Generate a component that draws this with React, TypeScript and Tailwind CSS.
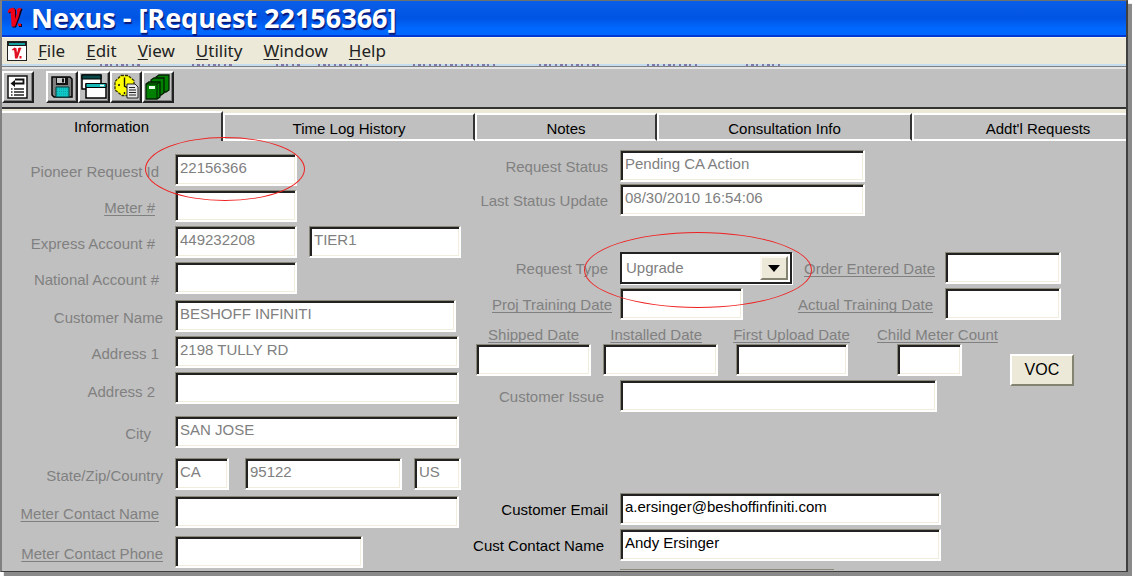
import React from "react";

const FONT = "font-['Liberation_Sans',Arial,sans-serif]";

function VMark({ className }: { className?: string }) {
  return (
    <svg viewBox="0 0 16 22" className={className} aria-hidden="true">
      <path d="M1.500 5.500L3 2.500L7 1L9 3L9.200 11.500L10.800 6L10.500 3L13 1.200L15.500 2L14.500 5L12.500 11L9 20.500H5.500L5 12L4.500 5L2.500 6.500Z" fill="#180018" />
      <path d="M0.500 5L2 2L6 0.500L8 2.500L8.200 12L10 6L9.500 2.500L12 0.800L14.500 1.500L13 4L11.500 10L8 19.500H4.500L4.200 12L3.500 4.500L1.500 6Z" fill="#f00018" />
      <path d="M12 17h3v3h-3z" fill="#180018" />
      <path d="M11 16.500h3v2.500h-3z" fill="#f00018" />
    </svg>
  );
}

function DocumentIcon() {
  return (
    <svg viewBox="0 0 21 21" className="h-[21px] w-[21px]" aria-hidden="true">
      <rect x="0.500" y="0.500" width="19" height="19" fill="#fff" stroke="#222" />
      <path d="M1 1h18v4H1z" fill="#1c1c1c" />
      <path d="M2 2h16v2H2z" fill="#18a0a0" />
      <path d="M5 8.500L7.500 6.500L9.500 7.500L10 12L11 9L10.800 7.500L12.500 6.500L14.500 7L13.500 9L10.500 17.500H8L7.500 12L7 9L5.500 9.500Z" fill="#e01020" />
      <path d="M12.500 15h2v2.500h-2z" fill="#e01020" />
    </svg>
  );
}

function ListIcon() {
  return (
    <svg viewBox="0 0 24 24" className="h-6 w-6" aria-hidden="true">
      <rect x="2" y="1" width="19" height="22" fill="#fff" stroke="#111" strokeWidth="1.500" />
      <path d="M7 8.500h10.500V4.500H9" fill="none" stroke="#111" strokeWidth="1.800" />
      <path d="M9 5L4.500 8.500L9 12z" fill="#111" />
      <path d="M8 14h10M8 17h10M8 20h10" stroke="#222" strokeWidth="1.300" />
      <path d="M5 14h1.500M5 17h1.500M5 20h1.500" stroke="#222" strokeWidth="1.300" />
    </svg>
  );
}

function SaveIcon() {
  return (
    <svg viewBox="0 0 24 24" className="h-6 w-6" aria-hidden="true">
      <path d="M2 2h18l2 2v18H4l-2-2z" fill="#808080" stroke="#000" strokeWidth="1.500" />
      <path d="M6 2h12v8H6z" fill="#111" />
      <path d="M7 3h8v5H7z" fill="#c8c8c8" />
      <path d="M12 3.500h2v4h-2z" fill="#111" />
      <path d="M6 12h13v10H6z" fill="#10c8c8" stroke="#003838" />
      <path d="M7 14h11M7 16.500h11M7 19h11" stroke="#08a0a0" strokeDasharray="1 1" />
    </svg>
  );
}

function WindowsIcon() {
  return (
    <svg viewBox="0 0 26 26" className="h-[26px] w-[26px]" aria-hidden="true">
      <rect x="1" y="1" width="19" height="14" fill="#fff" stroke="#000" strokeWidth="1.500" />
      <path d="M1 1h19v4H1z" fill="#084848" stroke="#000" />
      <rect x="5" y="10" width="20" height="14" fill="#fff" stroke="#000" strokeWidth="1.500" />
      <path d="M5 9.500h20v4H5z" fill="#18b8b8" stroke="#000" />
      <path d="M19 11.500h4" stroke="#fff" strokeWidth="1.500" />
    </svg>
  );
}

function ClockIcon() {
  return (
    <svg viewBox="0 0 26 26" className="h-[26px] w-[26px]" aria-hidden="true">
      <path d="M8 1.500h7l6 5v8l-5 7H9L2 16V7.500z" fill="#ffff00" stroke="#333300" strokeWidth="1.300" strokeDasharray="3 1" />
      <path d="M11.500 3.500V12l5 3M5 11h2M11.500 18v2M17 11h2" fill="none" stroke="#111" strokeWidth="1.400" />
      <path d="M14 10h8l3 3v11H14z" fill="#e8e8e8" stroke="#222" />
      <path d="M16 13.500h6M16 16h7M16 18.500h7M16 21h7" stroke="#222" />
    </svg>
  );
}

function BooksIcon() {
  return (
    <svg viewBox="0 0 26 26" className="h-[26px] w-[26px]" aria-hidden="true">
      <path d="M11 3l3-2h10v15l-3 2H11z" fill="#008000" stroke="#002000" strokeWidth="1.300" />
      <path d="M6 6l3-2h10v15l-3 2H6z" fill="#008000" stroke="#002000" strokeWidth="1.300" />
      <path d="M1 10l3-2h11v15l-3 2H1z" fill="#008000" stroke="#002000" strokeWidth="1.300" />
      <path d="M1 10h11v15M12 10l3-2" fill="none" stroke="#002000" />
      <path d="M4 12h6v3H4z" fill="#e8ffe8" />
    </svg>
  );
}

function ToolButton({ label, children }: { label: string; children: React.ReactNode }) {
  return (
    <button
      type="button"
      aria-label={label}
      className="flex h-8 w-8 items-center justify-center border-2 border-t-white border-r-[#222] border-b-[#222] border-l-white bg-[#c0c0c0] shadow-[inset_-1px_-1px_0_#808080]"
    >
      {children}
    </button>
  );
}

function MenuItem({ text }: { text: string }) {
  return (
    <button type="button" className="text-[#222]">
      <span className="underline decoration-1 underline-offset-2">{text[0]}</span>
      {text.slice(1)}
    </button>
  );
}

type FieldProps = { id: string; value?: string; width: string; dark?: boolean; label?: string };

function Field({ id, value = "", width, dark, label }: FieldProps) {
  return (
    <input
      id={id}
      aria-label={label}
      defaultValue={value}
      readOnly={!dark}
      className={`block h-8 shrink-0 rounded-none border border-r-2 border-b-2 border-t-[#8a8878] border-r-white border-b-white border-l-[#8a8878] bg-white pb-1.5 pt-0.5 pl-1 text-[15px] leading-5 shadow-[inset_2px_2px_0_#222,inset_-1px_-1px_0_#f1ecdc] outline-none ${width} ${dark ? "text-black" : "text-[#808080]"}`}
    />
  );
}

type LabelProps = { htmlFor: string; text: string; box: string; underline?: boolean; dark?: boolean };

function Label({ htmlFor, text, box, underline, dark }: LabelProps) {
  return (
    <label
      htmlFor={htmlFor}
      className={`block shrink-0 whitespace-nowrap text-right text-[15px] leading-5 ${box} ${dark ? "text-black" : "text-[#808080]"} ${underline ? "underline decoration-1 underline-offset-2 [text-decoration-skip-ink:none]" : ""}`}
    >
      {text}
    </label>
  );
}

function Ring({ box }: { box: string }) {
  return <span aria-hidden="true" className={`pointer-events-none absolute z-10 rounded-[50%] border border-[#f02020] ${box}`} />;
}

const LEFT = "w-[173px] pt-1";
const RIGHT = "w-[159px] pt-0.5";

function LeftColumn() {
  return (
    <div className="w-[459px] shrink-0 pt-1">
      <div className="flex items-center">
        <Label htmlFor="req" text="Pioneer Request Id" box={`${LEFT} pr-4`} />
        <div className="relative">
          <Field id="req" value="22156366" width="w-[122px]" />
          <Ring box="-left-[30px] -top-[17px] h-16 w-40" />
        </div>
      </div>
      <div className="mt-1 flex items-center">
        <Label htmlFor="meter" text="Meter #" box={`${LEFT} pr-5`} underline />
        <Field id="meter" width="w-[122px]" />
      </div>
      <div className="mt-1 flex items-center">
        <Label htmlFor="express" text="Express Account #" box={`${LEFT} pr-5`} />
        <Field id="express" value="449232208" width="w-[122px]" />
        <div className="ml-3">
          <Field id="tier" label="Tier" value="TIER1" width="w-[152px]" />
        </div>
      </div>
      <div className="mt-1 flex items-center">
        <Label htmlFor="national" text="National Account #" box={`${LEFT} pr-4`} />
        <Field id="national" width="w-[122px]" />
      </div>
      <div className="mt-1.5 flex items-center">
        <Label htmlFor="customer" text="Customer Name" box={`${LEFT} pr-3`} />
        <Field id="customer" value="BESHOFF INFINITI" width="w-[281px]" />
      </div>
      <div className="mt-1 flex items-center">
        <Label htmlFor="addr1" text="Address 1" box={`${LEFT} pr-4`} />
        <Field id="addr1" value="2198 TULLY RD" width="w-[284px]" />
      </div>
      <div className="mt-1 flex items-center">
        <Label htmlFor="addr2" text="Address 2" box={`${LEFT} pt-2 pr-5`} />
        <Field id="addr2" width="w-[284px]" />
      </div>
      <div className="mt-3 flex items-center">
        <Label htmlFor="city" text="City" box={`${LEFT} pr-6`} />
        <Field id="city" value="SAN JOSE" width="w-[284px]" />
      </div>
      <div className="mt-2.5 flex items-center">
        <Label htmlFor="state" text="State/Zip/Country" box={`${LEFT} pr-3`} />
        <Field id="state" value="CA" width="w-[54px]" />
        <div className="ml-4">
          <Field id="zip" label="Zip" value="95122" width="w-[157px]" />
        </div>
        <div className="ml-3">
          <Field id="country" label="Country" value="US" width="w-[47px]" />
        </div>
      </div>
      <div className="mt-1.5 flex items-center">
        <Label htmlFor="mname" text="Meter Contact Name" box={`${LEFT} pr-4`} underline />
        <Field id="mname" width="w-[284px]" />
      </div>
      <div className="mt-2 flex items-center">
        <Label htmlFor="mphone" text="Meter Contact Phone" box={`${LEFT} pr-3`} underline />
        <Field id="mphone" width="w-[188px]" />
      </div>
    </div>
  );
}

function RightColumn() {
  return (
    <div className="min-w-0 flex-1">
      <div className="flex items-center">
        <Label htmlFor="status" text="Request Status" box={`${RIGHT} pr-3`} />
        <Field id="status" value="Pending CA Action" width="w-[245px]" />
      </div>
      <div className="mt-0.5 flex items-center">
        <Label htmlFor="updated" text="Last Status Update" box={`${RIGHT} pr-3`} />
        <Field id="updated" value="08/30/2010 16:54:06" width="w-[245px]" />
      </div>
      <div className="mt-9 flex items-center">
        <Label htmlFor="type" text="Request Type" box={`${RIGHT} pr-3`} />
        <div className="relative w-[172px] shrink-0">
          <select
            id="type"
            defaultValue="Upgrade"
            className="block h-8 w-full appearance-none rounded-none border-2 border-[#222] bg-white pl-1 text-[15px] leading-5 text-[#808080] shadow-[1px_1px_0_#fff] outline-none"
          >
            <option>Upgrade</option>
          </select>
          <span
            aria-hidden="true"
            className="pointer-events-none absolute right-1 top-1 flex h-6 w-7 items-center justify-center border-2 border-t-[#faf8f0] border-r-[#848270] border-b-[#848270] border-l-[#faf8f0] bg-[#ece9d8]"
          >
            <svg viewBox="0 0 12 7" className="h-[7px] w-3">
              <path d="M0 0h12L6 7z" fill="#000" />
            </svg>
          </span>
          <Ring box="-left-9 -top-5 h-[76px] w-[228px]" />
        </div>
        <Label htmlFor="ordered" text="Order Entered Date" box="w-[153px] pt-0.5 pr-2.5" underline />
        <Field id="ordered" width="w-[116px]" />
      </div>
      <div className="mt-1 flex items-center">
        <Label htmlFor="proj" text="Proj Training Date" box={`${RIGHT} pr-2`} underline />
        <div className="w-[172px] shrink-0">
          <Field id="proj" width="w-[123px]" />
        </div>
        <Label htmlFor="actual" text="Actual Training Date" box="w-[153px] pt-0.5 pr-3" underline />
        <Field id="actual" width="w-[116px]" />
      </div>
      <div className="mt-1 flex items-start">
        <div className="shrink-0">
          <div className="flex pl-[15px]">
            <div className="w-[115px]">
              <Label htmlFor="shipped" text="Shipped Date" box="h-5 w-full pt-px pr-3" underline />
              <Field id="shipped" width="w-[115px]" />
            </div>
            <div className="ml-3 w-[115px]">
              <Label htmlFor="installed" text="Installed Date" box="h-5 w-full pt-px pr-4" underline />
              <Field id="installed" width="w-[115px]" />
            </div>
            <div className="ml-4 flex w-[115px] flex-col items-center">
              <Label htmlFor="upload" text="First Upload Date" box="h-5 pt-px" underline />
              <Field id="upload" width="w-[112px]" />
            </div>
            <div className="ml-7">
              <Label htmlFor="child" text="Child Meter Count" box="h-5 pt-px" underline />
              <div className="pl-5">
                <Field id="child" width="w-[65px]" />
              </div>
            </div>
          </div>
          <div className="mt-1 flex items-center">
            <Label htmlFor="issue" text="Customer Issue" box={`${RIGHT} pr-4`} />
            <Field id="issue" width="w-[317px]" />
          </div>
        </div>
        <button
          type="button"
          className="ml-3 mt-[30px] h-8 w-16 border-2 border-t-white border-r-[#848270] border-b-[#848270] border-l-white bg-[#ece9d8] text-[16px] leading-5 text-black"
        >
          VOC
        </button>
      </div>
      <div className="mt-[81px] flex items-center">
        <Label htmlFor="email" text="Customer Email" box={`${RIGHT} pr-3`} dark />
        <Field id="email" value="a.ersinger@beshoffinfiniti.com" width="w-[321px]" dark />
      </div>
      <div className="mt-1 flex items-center">
        <Label htmlFor="contact" text="Cust Contact Name" box={`${RIGHT} pr-4`} dark />
        <Field id="contact" value="Andy Ersinger" width="w-[321px]" dark />
      </div>
      <div className="mt-2 ml-[159px] h-px w-[214px] bg-[#8a8878]" />
    </div>
  );
}

const TABS = [
  { name: "Time Log History", box: "w-[252px]" },
  { name: "Notes", box: "w-[182px]" },
  { name: "Consultation Info", box: "w-[255px]" },
];

export default function App() {
  return (
    <div className={`flex min-h-screen flex-col overflow-hidden bg-white pr-1 pb-1 ${FONT}`}>
      <div className="flex flex-1 flex-col border-2 border-t border-b border-t-[#707070] border-r-[#404040] border-b-[#404040] border-l-[#808080] bg-[#c0c0c0] shadow-[4px_4px_1px_#8a8a8a]">
        <header className="flex h-9 items-center border-b-2 border-[#0038d0] bg-linear-to-b from-[#0a5ee8] via-[#0054e3] via-50% to-[#0068ff] to-80% pl-[5px]">
          <VMark className="h-[22px] w-4" />
          <h1 className="ml-2 whitespace-nowrap font-['Open_Sans','Noto_Sans',sans-serif] text-[27px] font-bold leading-8 text-white [text-shadow:1px_2px_1px_#0a1878]">
            Nexus - [Request 22156366]
          </h1>
        </header>
        <nav className="flex h-[27px] items-center border-t border-[#f8f4e8] bg-[#ece9d8] pl-[5px] font-['Noto_Sans',sans-serif] text-[17px] leading-6">
          <DocumentIcon />
          <div className="ml-2.5 flex gap-[21px]">
            <MenuItem text="File" />
            <MenuItem text="Edit" />
            <MenuItem text="View" />
            <MenuItem text="Utility" />
            <MenuItem text="Window" />
            <MenuItem text="Help" />
          </div>
        </nav>
        <svg className="h-0.5 w-full bg-[#c4dcf0]" aria-hidden="true">
          <path
            d="M98 1h42M190 1h40M274 1h26M316 1h50M411 1h84M537 1h64M645 1h52M744 1h34"
            stroke="#8078a8"
            strokeWidth="2"
            strokeDasharray="2 3 3 2 2 4"
          />
        </svg>
        <div className="flex h-[41px] items-start border-t border-[#808080] pt-1 shadow-[inset_0_2px_0_#e4e4e4]">
          <ToolButton label="List"><ListIcon /></ToolButton>
          <div className="ml-3 flex">
            <ToolButton label="Save"><SaveIcon /></ToolButton>
            <ToolButton label="Windows"><WindowsIcon /></ToolButton>
            <ToolButton label="Time"><ClockIcon /></ToolButton>
            <ToolButton label="Books"><BooksIcon /></ToolButton>
          </div>
        </div>
        <div role="tablist" className="flex h-[34px] items-end border-t-2 border-[#333] bg-[#ece9d8] text-[15px] leading-5">
          <button
            type="button"
            role="tab"
            aria-selected="true"
            className="h-[30px] w-[221px] shrink-0 border-t-2 border-r-2 border-t-white border-r-[#333] bg-[#c0c0c0]"
          >
            Information
          </button>
          {TABS.map((t) => (
            <button
              key={t.name}
              type="button"
              role="tab"
              aria-selected="false"
              className={`h-7 shrink-0 border-2 border-t-white border-r-[#333] border-b-white border-l-white bg-[#c0c0c0] pt-1 ${t.box}`}
            >
              {t.name}
            </button>
          ))}
          <button
            type="button"
            role="tab"
            aria-selected="false"
            className="h-7 flex-1 border-2 border-r-0 border-white bg-[#c0c0c0] pl-9 pt-1"
          >
            Addt'l Requests
          </button>
        </div>
        <main className="flex pt-[9px]">
          <LeftColumn />
          <RightColumn />
        </main>
      </div>
    </div>
  );
}
